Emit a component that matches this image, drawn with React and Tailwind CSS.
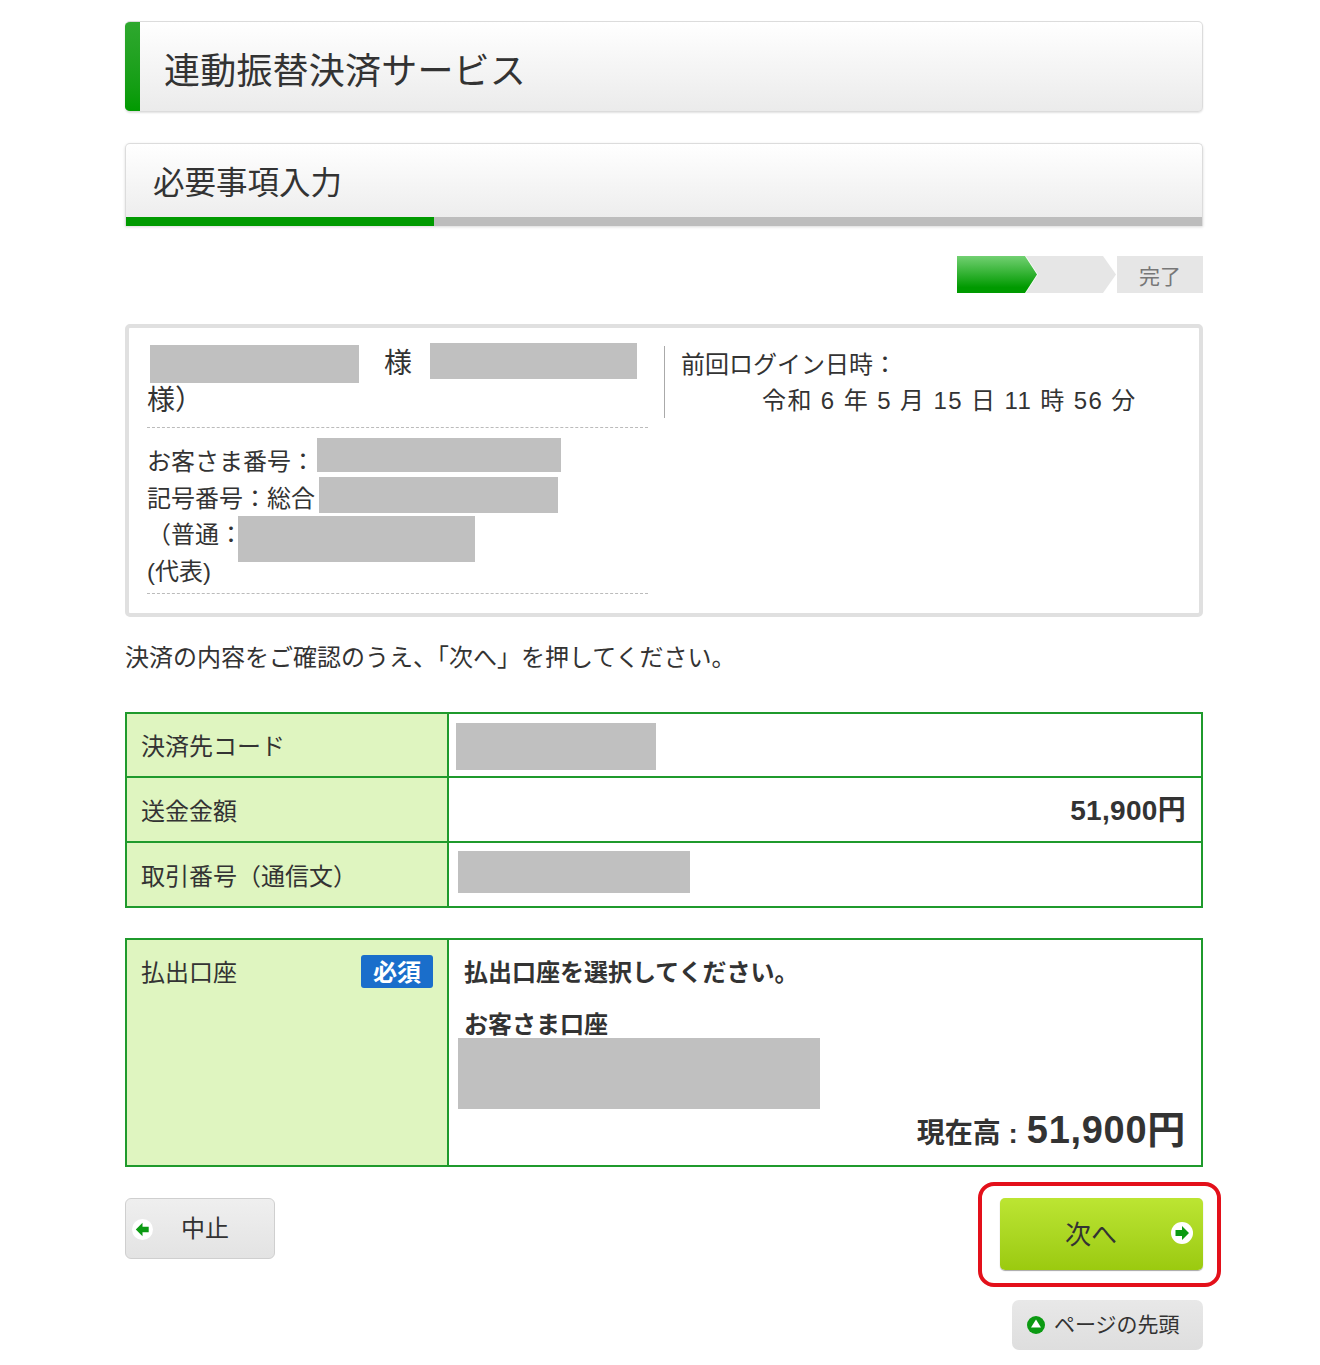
const fontStack = { fontFamily: '"Liberation Sans", "Noto Sans CJK JP", sans-serif' }

const Redact = ({ className }) => <div className={`absolute bg-[#c0c0c0] ${className}`} />

const ArrowIcon = ({ dir = 'right', className }) => (
  <svg viewBox="0 0 22 22" className={className}>
    <circle cx="11" cy="11" r="11" fill="#fff" />
    <path
      d={dir === 'right' ? 'M4.5 8h6.5V4l7 7-7 7v-4H4.5z' : 'M17.5 8H11V4l-7 7 7 7v-4h6.5z'}
      fill="#0b9a12"
    />
  </svg>
)

const TopIcon = ({ className }) => (
  <svg viewBox="0 0 20 20" className={className}>
    <circle cx="10" cy="10" r="9" fill="#0b9a12" />
    <path d="M10 4.5l5 8h-10z" fill="#fff" />
  </svg>
)

const StepArrows = () => (
  <svg width="160" height="37" viewBox="0 0 160 37" className="block">
    <defs>
      <linearGradient id="stepGreen" x1="0" y1="0" x2="0" y2="1">
        <stop offset="0" stopColor="#72d072" />
        <stop offset="0.85" stopColor="#009a00" />
        <stop offset="1" stopColor="#009a00" />
      </linearGradient>
    </defs>
    <path d="M60 0h86l13 18.5L146 37H60z" fill="#e6e6e6" />
    <path d="M0 0h68l12 18.5L68 37H0z" fill="url(#stepGreen)" stroke="#fff" strokeWidth="1.5" />
    <path d="M0 0h68l12 18.5L68 37H0z" fill="url(#stepGreen)" />
  </svg>
)

const LabelCell = ({ children, className = '' }) => (
  <div className={`w-[322px] shrink-0 border-r-2 border-[#1f9a2c] bg-[#dff5c0] pl-[14px] ${className}`}>
    {children}
  </div>
)

const App = () => {
  return (
    <div className="h-[1365px] bg-white pl-[125px] pt-[21px] text-[24px] text-[#333]" style={fontStack}>
      <div className="relative w-[1078px]">
        <div className="flex h-[91px] overflow-hidden rounded-[5px] border-t border-b border-r border-[#dcdcdc] bg-gradient-to-b from-white to-[#ebebeb] shadow-[0_1px_2px_rgba(0,0,0,0.12)]">
          <div className="w-[15px] shrink-0 bg-gradient-to-b from-[#2ea82e] to-[#009a00]" />
          <h1 className="pl-[24px] text-[36px] leading-[100px] font-normal tracking-[0.2px] whitespace-nowrap">連動振替決済サービス</h1>
        </div>

        <div className="mt-[31px] h-[83px] overflow-hidden rounded-t-[5px] border-x border-t border-[#dcdcdc] bg-gradient-to-b from-white to-[#ebebeb] shadow-[0_1px_3px_rgba(0,0,0,0.15)]">
          <h2 className="h-[73px] pl-[27px] text-[31.5px] leading-[78px] font-normal">必要事項入力</h2>
          <div className="h-[9px] bg-[#bdbdbd]">
            <div className="h-full w-[308px] bg-[#009a00]" />
          </div>
        </div>

        <div className="mt-[30px] flex h-[37px] justify-end">
          <div className="w-[160px]"><StepArrows /></div>
          <div className="w-[86px] bg-[#e6e6e6] pl-[22px] text-[21px] leading-[41px] text-[#777]">完了</div>
        </div>

        <div className="relative mt-[31px] flex h-[293px] rounded-[5px] border-4 border-[#e0e0e0] bg-white pl-[18px]">
          <div className="w-[501px] shrink-0">
            <div className="h-[100px] border-b border-dashed border-[#bbb] pt-[17px] text-[28px] leading-[37px]">
              <div className="pl-[237px]">様</div>
              <div>様）</div>
            </div>
            <div className="h-[166px] border-b border-dashed border-[#bbb] pt-[16px] leading-[36.5px]">
              <div>お客さま番号：</div>
              <div>記号番号：総合</div>
              <div>（普通：</div>
              <div>(代表)</div>
            </div>
          </div>
          <div className="mt-[18px] ml-[16px] h-[72px] border-l border-[#aaa] pt-[1px] pl-[16px] leading-[36px]">
            <div>前回ログイン日時：</div>
            <div className="pl-[81px] tracking-[1.4px] whitespace-nowrap">令和 6 年 5 月 15 日 11 時 56 分</div>
          </div>
          <Redact className="top-[17px] left-[21px] h-[38px] w-[209px]" />
          <Redact className="top-[15px] left-[301px] h-[36px] w-[207px]" />
          <Redact className="top-[110px] left-[188px] h-[34px] w-[244px]" />
          <Redact className="top-[149px] left-[190px] h-[36px] w-[239px]" />
          <Redact className="top-[188px] left-[109px] h-[46px] w-[237px]" />
        </div>

        <p className="mt-[23px] h-[34px] leading-[36px]">決済の内容をご確認のうえ、「次へ」を押してください。</p>

        <div className="relative mt-[38px] border-2 border-[#1f9a2c]">
          <div className="flex h-[64px] border-b-2 border-[#1f9a2c]">
            <LabelCell className="leading-[66px]">決済先コード</LabelCell>
            <div className="flex-1" />
          </div>
          <div className="flex h-[65px] border-b-2 border-[#1f9a2c]">
            <LabelCell className="leading-[68px]">送金金額</LabelCell>
            <div className="flex-1 pr-[15px] text-right text-[28px] leading-[66px] font-bold tracking-[0.3px]">51,900円</div>
          </div>
          <div className="flex h-[63px]">
            <LabelCell className="leading-[68px]">取引番号（通信文）</LabelCell>
            <div className="flex-1" />
          </div>
          <Redact className="top-[9px] left-[329px] h-[47px] w-[200px]" />
          <Redact className="top-[137px] left-[331px] h-[42px] w-[232px]" />
        </div>

        <div className="relative mt-[30px] flex h-[229px] border-2 border-[#1f9a2c]">
          <LabelCell className="relative pt-[12px] leading-[42px]">
            払出口座
            <span className="absolute top-[15px] right-[14px] h-[33px] w-[72px] rounded-[3px] bg-[#1a6ecb] text-center leading-[35px] font-bold text-white">必須</span>
          </LabelCell>
          <div className="flex flex-1 flex-col pl-[15px] font-bold">
            <div className="pt-[12px] leading-[42px]">払出口座を選択してください。</div>
            <div className="mt-[10px] leading-[42px]">お客さま口座</div>
            <div className="mt-auto flex items-baseline justify-end pr-[15px] pb-[6px] text-[28px]">
              現在高 :<span className="ml-[9px] text-[38px] tracking-[0.7px]">51,900円</span>
            </div>
          </div>
          <Redact className="top-[98px] left-[331px] h-[71px] w-[362px]" />
        </div>

        <div className="relative mt-[31px] flex items-start justify-between">
          <button className="flex h-[61px] w-[150px] items-center rounded-[6px] border border-[#cfcfcf] bg-gradient-to-b from-[#efefef] to-[#e3e3e3] pt-[1px] pl-[6px] text-[#333]">
            <ArrowIcon dir="left" className="h-[21px] w-[21px]" />
            <span className="ml-[28px]">中止</span>
          </button>
          <button className="relative flex h-[72px] w-[203px] items-center rounded-[5px] bg-gradient-to-b from-[#bce532] to-[#9bca0e] pt-[2px] pl-[65px] text-[26px] text-[#333] shadow-[0_1px_1px_rgba(0,0,0,0.35)]">
            次へ
            <ArrowIcon className="absolute top-[24px] right-[10px] h-[22px] w-[22px]" />
          </button>
          <div className="absolute top-[-16px] right-[-18px] h-[105px] w-[243px] rounded-[16px] border-[4px] border-[#e3101a]" />
        </div>

        <div className="mt-[30px] flex justify-end">
          <a className="flex h-[50px] w-[191px] items-center rounded-[7px] bg-gradient-to-b from-[#e8e8e8] to-[#dedede] pl-[14px] text-[21px]">
            <TopIcon className="h-[20px] w-[20px]" />
            <span className="ml-[8px]">ページの先頭</span>
          </a>
        </div>
      </div>
    </div>
  )
}

export default App
